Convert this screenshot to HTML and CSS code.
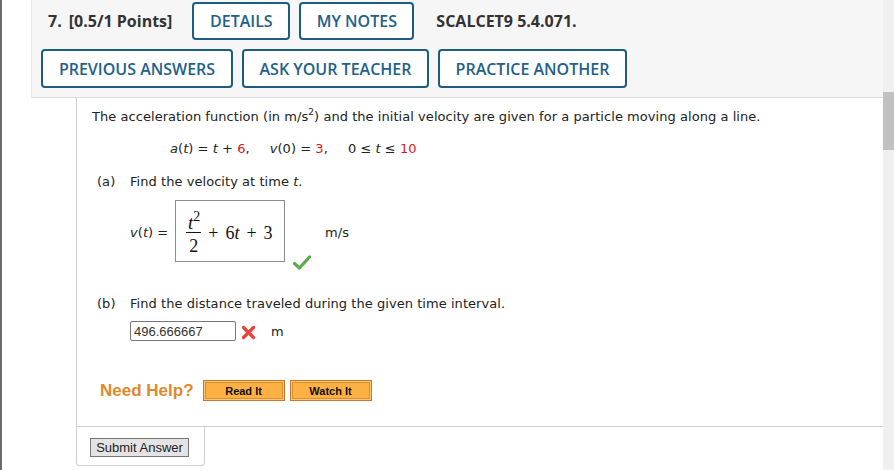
FILE: index.html
```html
<!DOCTYPE html>
<html>
<head>
<meta charset="utf-8">
<link rel="stylesheet" href="styles.css">
</head>
<body>
<div class="edge"></div>
<div class="page">
  <div class="header">
    <div class="row1">
      <span class="qnum">7.</span>
      <span class="points">[0.5/1 Points]</span>
      <button class="tbtn w-details">DETAILS</button>
      <button class="tbtn w-notes">MY NOTES</button>
      <span class="code">SCALCET9 5.4.071.</span>
    </div>
    <div class="row2">
      <button class="tbtn w-prev">PREVIOUS ANSWERS</button>
      <button class="tbtn w-ask">ASK YOUR TEACHER</button>
      <button class="tbtn w-practice">PRACTICE ANOTHER</button>
    </div>
  </div>
  <div class="question">
    <p class="intro">The acceleration function (in m/s<sup>2</sup>) and the initial velocity are given for a particle moving along a line.</p>
    <p class="given"><i>a</i>(<i>t</i>) = <i>t</i> + <span class="red">6</span>,<span class="sp"></span><i>v</i>(0) = <span class="red">3</span>,<span class="sp"></span>0 ≤ <i>t</i> ≤ <span class="red">10</span></p>
    <p class="part pa"><span class="plabel">(a)</span><span>Find the velocity at time <i>t</i>.</span></p>
    <div class="ansrow">
      <span class="vlabel"><i>v</i>(<i>t</i>) =</span>
      <div class="mathbox">
        <span class="frac">
          <span class="num"><i>t</i><sup>2</sup></span>
          <span class="den">2</span>
        </span>
        <span class="op">+</span><span class="term">6<i>t</i></span><span class="op">+</span><span class="term">3</span>
      </div>
      <svg class="check" width="18" height="15" viewBox="0 0 18 15"><path d="M1.5 8.5 L6.5 13 L16.5 2" fill="none" stroke="#5dab4a" stroke-width="3.2" stroke-linejoin="round" stroke-linecap="round"/></svg>
      <span class="unit">m/s</span>
    </div>
    <p class="part pb"><span class="plabel">(b)</span><span>Find the distance traveled during the given time interval.</span></p>
    <div class="inrow">
      <input class="ans" type="text" value="496.666667">
      <svg class="cross" width="15" height="15" viewBox="0 0 15 15"><path d="M2.5 2.5 L12.5 12.5 M12.5 2.5 L2.5 12.5" fill="none" stroke="#e5453d" stroke-width="3.4" stroke-linecap="round"/></svg>
      <span class="unit-m">m</span>
    </div>
    <div class="help">
      <span class="needhelp">Need Help?</span>
      <button class="obtn">Read It</button>
      <button class="obtn">Watch It</button>
    </div>
  </div>
  <div class="submitTab">
    <button class="submit">Submit Answer</button>
  </div>
</div>
<div class="scroll"><div class="thumb"></div></div>
</body>
</html>
```
FILE: styles.css
```css
html, body {
  margin: 0;
  padding: 0;
  background: #fff;
}
body {
  display: flex;
  width: 894px;
  height: 470px;
  overflow: hidden;
  font-family: "DejaVu Sans", Verdana, sans-serif;
  font-size: 13px;
  color: #222;
}
.edge {
  width: 2px;
  background: #6a6a6a;
  flex: none;
}
.page {
  width: 881px;
  flex: none;
  display: flex;
  flex-direction: column;
}
.header {
  margin-left: 29px;
  height: 98px;
  box-sizing: border-box;
  background: #f6f6f6;
  border-bottom: 1px solid #dcdcdc;
  border-left: 1px solid #e8e8e8;
  font-family: "Open Sans", sans-serif;
}
.row1 {
  display: flex;
  align-items: center;
  height: 38px;
  margin-top: 2px;
  padding-left: 16px;
}
.qnum, .points, .code {
  font-weight: 700;
  font-size: 16px;
  color: #333;
}
.points { margin-left: 7px; }
.code { margin-left: 22px; }
.row2 {
  display: flex;
  gap: 9px;
  margin-top: 9px;
  padding-left: 9px;
}
.tbtn {
  height: 39px;
  box-sizing: border-box;
  background: #fff;
  border: 2px solid #1d5d82;
  border-radius: 4px;
  font-family: "Open Sans", sans-serif;
  font-weight: 600;
  font-size: 16px;
  letter-spacing: 0;
  color: #22618a;
  padding: 0;
  text-align: center;
}
.row1 .tbtn { height: 38px; }
.w-details { width: 98px; margin-left: 20px; }
.w-notes { width: 115px; margin-left: 9px; }
.w-prev { width: 192px; }
.w-ask { width: 187px; }
.w-practice { width: 189px; }

.question {
  margin-left: 74px;
  height: 329px;
  box-sizing: border-box;
  border-left: 1px solid #cfcfcf;
  border-bottom: 1px solid #cfcfcf;
  padding-left: 15px;
  padding-top: 10px;
  letter-spacing: 0.05px;
}
.question p {
  margin: 0;
  line-height: 18px;
}
sup {
  font-size: 9px;
  line-height: 0;
  vertical-align: 6px;
}
.given {
  margin-top: 14px !important;
  padding-left: 78px;
}
.sp { display: inline-block; width: 20px; }
.red { color: #d11a1a; }
.part {
  display: flex;
  white-space: pre;
}
.plabel {
  width: 33px;
  padding-left: 5px;
}
.pa { margin-top: 15px !important; }
.ansrow {
  display: flex;
  align-items: center;
  margin-top: 9px;
  padding-left: 38px;
  height: 62px;
}
.vlabel {
  width: 45px;
  margin-top: 2px;
}
.mathbox {
  width: 110px;
  height: 62px;
  box-sizing: border-box;
  border: 1px solid #8c8c8c;
  display: flex;
  align-items: center;
  padding-left: 10px;
  font-family: "Liberation Serif", "Times New Roman", serif;
  font-size: 18px;
  color: #111;
  letter-spacing: 0;
}
.frac {
  display: inline-flex;
  flex-direction: column;
  align-items: center;
  margin-top: 8px;
}
.num {
  line-height: 17px;
  padding: 0 1px 1px 2px;
  border-bottom: 1px solid #111;
  font-size: 19px;
}
.num sup {
  font-size: 14px;
  vertical-align: 8px;
}
.den {
  line-height: 22px;
  padding-top: 2px;
}
.op {
  margin: 5px 7px 0 7px;
}
.term {
  margin-top: 5px;
}
.check {
  align-self: flex-end;
  margin-left: 8px;
  margin-bottom: -8px;
}
.unit {
  margin-left: 14px;
  margin-top: 2px;
}
.pb { margin-top: 33px !important; }
.inrow {
  display: flex;
  align-items: center;
  margin-top: 8px;
  padding-left: 38px;
  height: 20px;
}
.ans {
  width: 106px;
  height: 20px;
  box-sizing: border-box;
  border: 1px solid #777;
  border-radius: 2px;
  padding: 0 3px;
  font-family: "Liberation Sans", Arial, sans-serif;
  font-size: 13px;
  color: #333;
  margin: 0;
}
.cross { margin-left: 5px; margin-top: 2px; }
.unit-m { margin-left: 15px; }
.help {
  display: flex;
  align-items: center;
  margin-top: 39px;
  padding-left: 8px;
  height: 21px;
}
.needhelp {
  font-family: "Liberation Sans", Arial, sans-serif;
  font-weight: 700;
  font-size: 17px;
  color: #e0892c;
  margin-right: 9px;
  letter-spacing: 0;
}
.obtn {
  width: 82px;
  height: 21px;
  box-sizing: border-box;
  margin: 0 5px 0 0;
  padding: 0;
  background: #fdb143;
  border: 1px solid #c7782a;
  box-shadow: inset 0 0 0 1px #fcc777, inset 0 0 0 2px #d98f34;
  font-family: "Liberation Sans", Arial, sans-serif;
  font-weight: 700;
  font-size: 11px;
  color: #111;
  letter-spacing: 0;
}
.submitTab {
  margin-left: 74px;
  width: 129px;
  height: 39px;
  box-sizing: border-box;
  border: 1px solid #cfcfcf;
  border-top: none;
  border-radius: 0 0 4px 4px;
  padding: 11px 0 0 13px;
}
.submit {
  width: 99px;
  height: 19px;
  box-sizing: border-box;
  padding: 0;
  margin: 0;
  background: #e4e4e4;
  border: 1px solid #767676;
  font-family: "Liberation Sans", Arial, sans-serif;
  font-size: 13px;
  color: #222;
  border-radius: 0;
}
.scroll {
  width: 11px;
  flex: none;
  background: #f0f0f0;
  padding-top: 92px;
  box-sizing: border-box;
}
.thumb {
  height: 58px;
  background: #c1c1c1;
}
```
